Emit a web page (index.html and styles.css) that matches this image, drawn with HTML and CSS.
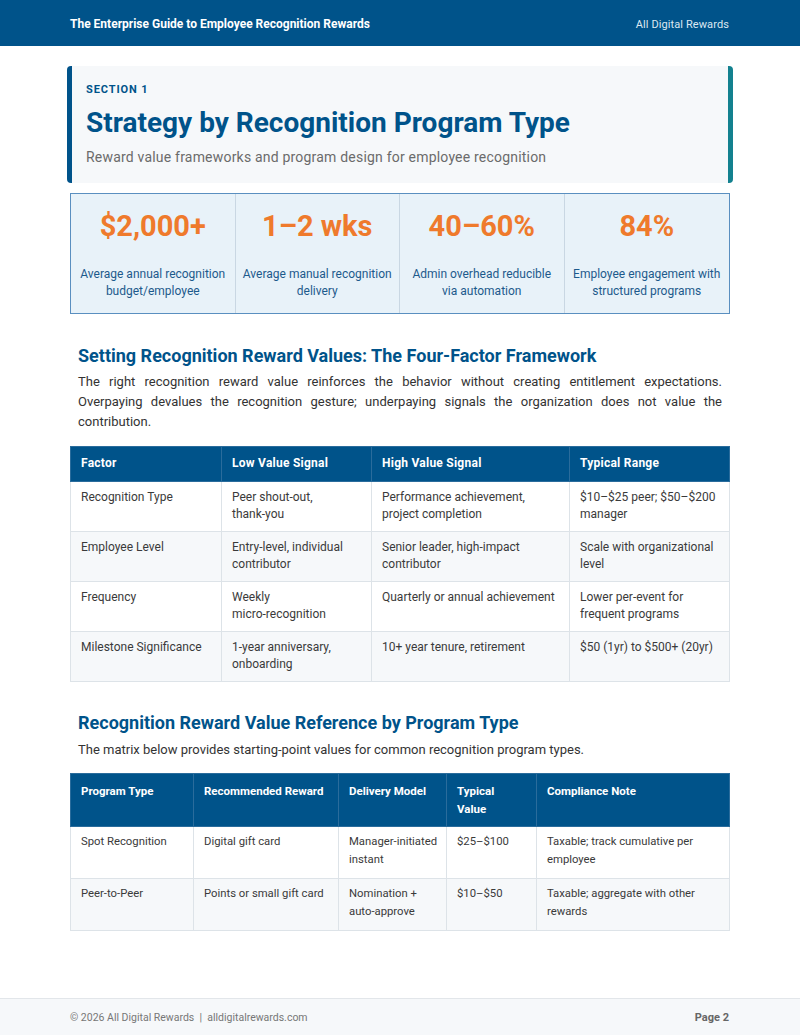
FILE: index.html
```html
<!DOCTYPE html>
<html>
<head>
<meta charset="utf-8">
<link rel="stylesheet" href="styles.css">
</head>
<body>
<header class="topbar">
  <span class="topbar-title">The Enterprise Guide to Employee Recognition Rewards</span>
  <span class="topbar-brand">All Digital Rewards</span>
</header>

<main class="content">
  <section class="hero">
    <div class="hero-kicker">SECTION 1</div>
    <h1 class="hero-title">Strategy by Recognition Program Type</h1>
    <p class="hero-sub">Reward value frameworks and program design for employee recognition</p>
  </section>

  <div class="stats">
    <div class="stat">
      <div class="stat-num">$2,000+</div>
      <div class="stat-label">Average annual recognition budget/employee</div>
    </div>
    <div class="stat">
      <div class="stat-num">1–2 wks</div>
      <div class="stat-label">Average manual recognition delivery</div>
    </div>
    <div class="stat">
      <div class="stat-num">40–60%</div>
      <div class="stat-label">Admin overhead reducible via automation</div>
    </div>
    <div class="stat">
      <div class="stat-num">84%</div>
      <div class="stat-label">Employee engagement with structured programs</div>
    </div>
  </div>

  <h2 class="h2 h2-first">Setting Recognition Reward Values: The Four-Factor Framework</h2>
  <p class="para">The right recognition reward value reinforces the behavior without creating entitlement expectations. Overpaying devalues the recognition gesture; underpaying signals the organization does not value the contribution.</p>

  <table class="tbl tbl1">
    <colgroup>
      <col class="c1a"><col class="c1b"><col class="c1c"><col>
    </colgroup>
    <thead>
      <tr><th>Factor</th><th>Low Value Signal</th><th>High Value Signal</th><th>Typical Range</th></tr>
    </thead>
    <tbody>
      <tr><td>Recognition Type</td><td>Peer shout-out, <span class="nowrap">thank-you</span></td><td>Performance achievement, project completion</td><td>$10–$25 peer; $50–$200 manager</td></tr>
      <tr><td>Employee Level</td><td>Entry-level, individual contributor</td><td>Senior leader, high-impact contributor</td><td>Scale with organizational level</td></tr>
      <tr><td>Frequency</td><td>Weekly<br>micro-recognition</td><td>Quarterly or annual achievement</td><td>Lower per-event for frequent programs</td></tr>
      <tr><td>Milestone Significance</td><td>1-year anniversary, onboarding</td><td>10+ year tenure, retirement</td><td>$50 (1yr) to $500+ (20yr)</td></tr>
    </tbody>
  </table>

  <h2 class="h2 h2-second">Recognition Reward Value Reference by Program Type</h2>
  <p class="para para-short">The matrix below provides starting-point values for common recognition program types.</p>

  <table class="tbl tbl2">
    <colgroup>
      <col class="c2a"><col class="c2b"><col class="c2c"><col class="c2d"><col>
    </colgroup>
    <thead>
      <tr><th>Program Type</th><th>Recommended Reward</th><th>Delivery Model</th><th>Typical Value</th><th>Compliance Note</th></tr>
    </thead>
    <tbody>
      <tr><td>Spot Recognition</td><td>Digital gift card</td><td><span class="nowrap">Manager-initiated</span> instant</td><td>$25–$100</td><td>Taxable; track cumulative per employee</td></tr>
      <tr><td>Peer-to-Peer</td><td>Points or small gift card</td><td>Nomination + auto-approve</td><td>$10–$50</td><td>Taxable; aggregate with other rewards</td></tr>
    </tbody>
  </table>
</main>

<footer class="footer">
  <span class="footer-left">© 2026 All Digital Rewards &nbsp;|&nbsp; alldigitalrewards.com</span>
  <span class="footer-right">Page 2</span>
</footer>
</body>
</html>
```

FILE: styles.css
```css
* { box-sizing: border-box; }
html, body { margin: 0; padding: 0; }
body {
  width: 800px;
  height: 1035px;
  font-family: Roboto, "Liberation Sans", sans-serif;
  color: #333;
  background: #fff;
  display: flex;
  flex-direction: column;
}
.nowrap { white-space: nowrap; }

.topbar {
  height: 46px;
  background: #00538a;
  display: flex;
  align-items: center;
  justify-content: space-between;
  padding: 2px 71px 0 70px;
  color: #fff;
}
.topbar-title { font-weight: bold; font-size: 12px; }
.topbar-brand { color: #dce8f2; font-size: 11px; letter-spacing: 0.1px; }

.content {
  flex: 1;
  padding: 20px 70px 0 70px;
}

.hero {
  margin: 0 -3px;
  background: #f6f8fa;
  border-left: 5px solid #00538a;
  border-right: 5px solid #13818f;
  border-radius: 4px;
  padding: 16px 14px 13px 14px;
  height: 117px;
}
.hero-kicker {
  font-size: 11px;
  font-weight: bold;
  color: #00538a;
  letter-spacing: 0.9px;
  line-height: 16px;
}
.hero-title {
  margin: 8px 0 0 0;
  font-size: 28px;
  line-height: 34px;
  font-weight: bold;
  color: #00538a;
}
.hero-sub {
  margin: 8px 0 0 0;
  font-size: 14px;
  line-height: 18px;
  letter-spacing: 0.2px;
  color: #6b6b6b;
}

.stats {
  margin-top: 10px;
  display: grid;
  grid-template-columns: repeat(4, 1fr);
  border: 1px solid #5a8fc0;
  background: #e8f2f9;
  height: 121px;
}
.stat {
  border-right: 1px solid #c9d7e3;
  text-align: center;
  padding: 14px 6px 0 6px;
}
.stat:last-child { border-right: none; }
.stat-num {
  font-size: 29px;
  line-height: 36px;
  font-weight: bold;
  color: #ef7a2c;
}
.stat-label {
  margin-top: 22px;
  font-size: 12px;
  line-height: 17px;
  color: #1d5a8c;
}

.h2 {
  margin: 0;
  font-size: 18px;
  line-height: 22px;
  font-weight: bold;
  color: #00538a;
  padding: 0 8px;
}
.h2-first { margin-top: 31px; }
.h2-second { margin-top: 30px; }

.para {
  margin: 5px 0 0 0;
  padding: 0 8px;
  font-size: 13px;
  line-height: 20px;
  color: #333;
  text-align: justify;
}
.para-short { margin-top: 6px; }

.tbl {
  width: 660px;
  border-collapse: collapse;
  table-layout: fixed;
}
.c1a { width: 151px; }
.c1b { width: 150px; }
.c1c { width: 198px; }
.c2a { width: 123px; }
.c2b { width: 145px; }
.c2c { width: 108px; }
.c2d { width: 90px; }

.tbl1 { margin-top: 14px; font-size: 12px; line-height: 17px; }
.tbl2 { margin-top: 13px; font-size: 11px; line-height: 18px; }
.tbl th {
  background: #00538a;
  color: #fff;
  text-align: left;
  font-weight: bold;
  vertical-align: top;
  border: 1px solid #2a6c9c;
}
.tbl1 th { height: 35px; padding: 8px 10px; font-size: 12px; letter-spacing: 0.25px; }
.tbl2 th { height: 50px; padding: 8px 10px; font-size: 11.5px; }
.tbl td {
  vertical-align: top;
  border: 1px solid #dde3e8;
  color: #3a3a3a;
}
.tbl1 td { height: 50px; padding: 7px 10px; }
.tbl2 td { height: 52px; padding: 6px 10px; font-size: 11.3px; }
.tbl tbody tr:nth-child(even) td { background: #f6f8fa; }

.footer {
  height: 37px;
  border-top: 1px solid #e2e6ea;
  background: #f6f8fa;
  display: flex;
  align-items: center;
  justify-content: space-between;
  padding: 0 71px 0 70px;
  font-size: 10.5px;
  color: #777;
}
.footer-right { font-weight: bold; color: #666; font-size: 11px; }
```
